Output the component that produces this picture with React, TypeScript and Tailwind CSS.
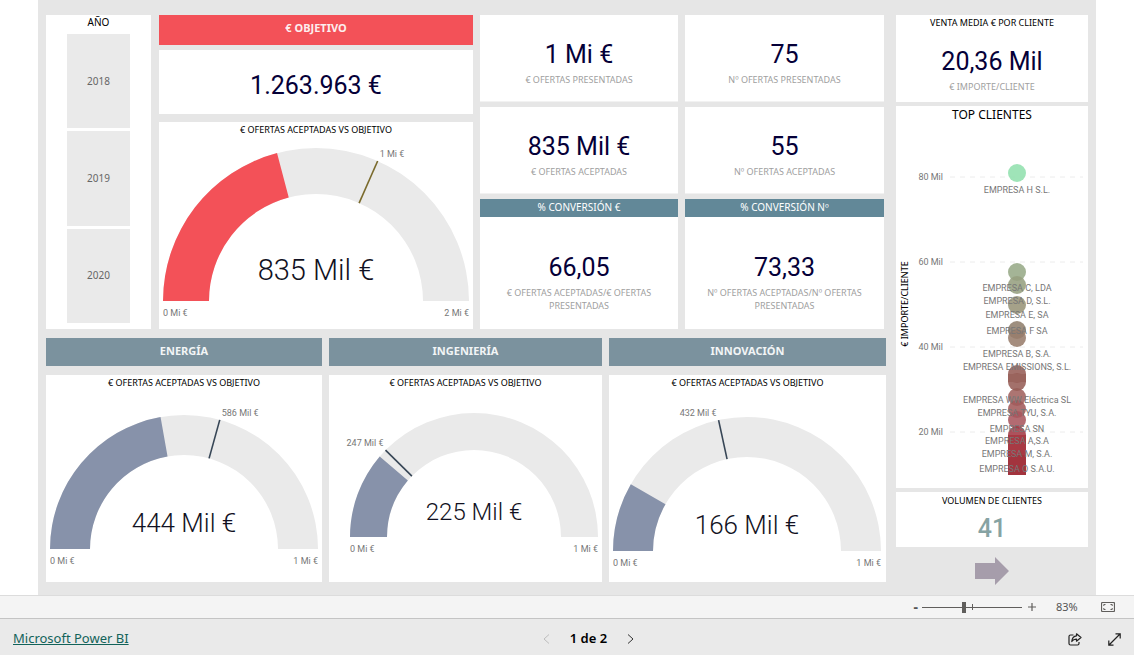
import { useState } from "react";

const DIN = "font-[Roboto,'Liberation_Sans',sans-serif]";
const SEGOE = "font-['Noto_Sans','Open_Sans',sans-serif]";

type GaugeProps = {
  width: number;
  height: number;
  cx: number;
  cy: number;
  r: number;
  inner: number;
  value: number;
  target: number;
  color: string;
  targetColor: string;
  valueLabel: string;
  targetLabel: string;
  maxLabel: string;
  valueClass: string;
  valueRise: number;
};

// t runs from 0 (left end) to 1 (right end) along the half circle
function polar(cx: number, cy: number, r: number, t: number) {
  const a = Math.PI * (1 - t);
  return [cx + r * Math.cos(a), cy - r * Math.sin(a)];
}

function arc(cx: number, cy: number, r: number, inner: number, from: number, to: number) {
  const [x1, y1] = polar(cx, cy, r, from);
  const [x2, y2] = polar(cx, cy, r, to);
  const [x3, y3] = polar(cx, cy, inner, to);
  const [x4, y4] = polar(cx, cy, inner, from);
  return `M${x1} ${y1}A${r} ${r} 0 0 1 ${x2} ${y2}L${x3} ${y3}A${inner} ${inner} 0 0 0 ${x4} ${y4}Z`;
}

function Gauge(p: GaugeProps) {
  const [tx1, ty1] = polar(p.cx, p.cy, p.r, p.target);
  const [tx2, ty2] = polar(p.cx, p.cy, p.inner, p.target);
  const right = p.target > 0.5;
  return (
    <svg viewBox={`0 0 ${p.width} ${p.height}`} className={`block w-full ${DIN}`} role="img" aria-label={p.valueLabel}>
      <path d={arc(p.cx, p.cy, p.r, p.inner, 0, 1)} fill="#eaeaea" />
      <path d={arc(p.cx, p.cy, p.r, p.inner, 0, p.value)} fill={p.color} />
      <line x1={tx1} y1={ty1} x2={tx2} y2={ty2} stroke={p.targetColor} strokeWidth="1.6" />
      <text x={right ? tx1 + 2 : tx1 - 2} y={ty1 - 4} textAnchor={right ? "start" : "end"} className="fill-[#777] text-[9px]">
        {p.targetLabel}
      </text>
      <text x={p.cx} y={p.cy - p.valueRise} textAnchor="middle" className={`fill-[#111122] font-light ${p.valueClass}`}>
        {p.valueLabel}
      </text>
      <text x={p.cx - p.r} y={p.cy + 15} className="fill-[#777] text-[9px]">
        0 Mi €
      </text>
      <text x={p.cx + p.r} y={p.cy + 15} textAnchor="end" className="fill-[#777] text-[9px]">
        {p.maxLabel}
      </text>
    </svg>
  );
}

function PanelTitle({ children }: { children: string }) {
  return <h2 className="text-center text-[9px] leading-[15px] text-black">{children}</h2>;
}

function Metric({ value, label }: { value: string; label: string }) {
  return (
    <>
      <p className={`text-[25px] leading-7 text-[#050038] ${DIN}`}>{value}</p>
      <p className="mt-1 text-[9px] leading-[13px] text-[#a0a0a0]">{label}</p>
    </>
  );
}

function MetricColumn({ items, title, ratio, ratioLabel }: {
  items: { value: string; label: string }[];
  title: string;
  ratio: string;
  ratioLabel: string;
}) {
  return (
    <div className="flex flex-col text-center">
      {items.map((m) => (
        <div key={m.label} className="mb-[5px] h-[87px] border-b border-[#f2f2f2] bg-white pt-[26px]">
          <Metric {...m} />
        </div>
      ))}
      <h2 className="bg-[#628898] pb-0.5 text-[10px] leading-4 text-white">{title}</h2>
      <div className="flex-1 bg-white px-3 pt-[37px]">
        <Metric value={ratio} label={ratioLabel} />
      </div>
    </div>
  );
}

const bubbles = [
  { y: 49, color: "#92e0ae" },
  { y: 148, color: "#97aa88" },
  { y: 161, color: "#969f80" },
  { y: 181, color: "#999479" },
  { y: 206, color: "#917f6d" },
  { y: 214, color: "#987d6c" },
  { y: 273, color: "#a0625e" },
  { y: 285, color: "#a25a5a" },
  { y: 296, color: "#a8565e" },
  { y: 250, color: "#965d56" },
  { y: 258, color: "#965d56" },
  { y: 311, color: "#a23a45" },
  { y: 320, color: "#a0353f" },
  { y: 330, color: "#a02f39" },
  { y: 338, color: "#a02f39" },
];

const clients = [
  { y: 69, name: "EMPRESA H S.L." },
  { y: 167, name: "EMPRESA C, LDA" },
  { y: 180, name: "EMPRESA D, S.L." },
  { y: 194, name: "EMPRESA E, SA" },
  { y: 210, name: "EMPRESA F SA" },
  { y: 233, name: "EMPRESA B, S.A." },
  { y: 246, name: "EMPRESA EMISSIONS, S.L." },
  { y: 279, name: "EMPRESA WW Eléctrica SL" },
  { y: 292, name: "EMPRESA TYU, S.A." },
  { y: 308, name: "EMPRESA SN" },
  { y: 320, name: "EMPRESA A,S.A" },
  { y: 333, name: "EMPRESA M, S.A." },
  { y: 348, name: "EMPRESA O S.A.U." },
];

const ticks = [
  { y: 53, label: "80 Mil" },
  { y: 138, label: "60 Mil" },
  { y: 223, label: "40 Mil" },
  { y: 308, label: "20 Mil" },
];

function ClientChart() {
  return (
    <svg viewBox="0 0 192 364" className={`block w-full ${DIN}`} role="img" aria-label="TOP CLIENTES">
      {ticks.map((t) => (
        <g key={t.label}>
          <line x1="54" x2="187" y1={t.y} y2={t.y} stroke="#ececec" strokeDasharray="5 5" />
          <text x="47" y={t.y + 3} textAnchor="end" className="fill-[#777] text-[9px]">{t.label}</text>
        </g>
      ))}
      <text transform="translate(12 180) rotate(-90)" textAnchor="middle" className={`fill-black text-[9px] ${SEGOE}`}>
        € IMPORTE/CLIENTE
      </text>
      {bubbles.map((b) => (
        <circle key={b.y} cx="121" cy={b.y} r="9" fill={b.color} fillOpacity="0.88" />
      ))}
      <rect x="112" y="250" width="18" height="8" fill="#9a645d" />
      <rect x="112" y="311" width="18" height="20" fill="#a83a44" />
      <rect x="112" y="331" width="18" height="20" fill="#a3343e" />
      {clients.map((c) => (
        <text key={c.name} x="121" y={c.y} textAnchor="middle" className="fill-[#777] text-[9px]">{c.name}</text>
      ))}
    </svg>
  );
}

const areas = [
  { title: "ENERGÍA", cx: 138, cy: 159, r: 134, inner: 94, value: 0.444, target: 0.586, label: "444 Mil €", targetLabel: "586 Mil €", width: 276, valueClass: "text-[26px]" },
  { title: "INGENIERÍA", cx: 145, cy: 147, r: 124, inner: 87, value: 0.225, target: 0.247, label: "225 Mil €", targetLabel: "247 Mil €", width: 273, valueClass: "text-[24px]" },
  { title: "INNOVACIÓN", cx: 138, cy: 161, r: 134, inner: 94, value: 0.166, target: 0.432, label: "166 Mil €", targetLabel: "432 Mil €", width: 277, valueClass: "text-[26px]" },
];

export default function App() {
  const [zoom, setZoom] = useState(83);
  const [year, setYear] = useState<number | null>(null);

  return (
    <div className={`flex min-h-screen flex-col bg-white ${SEGOE}`}>
      <main className="mx-[38px] flex flex-1 gap-2.5 bg-[#e6e6e6] px-2 pt-[15px]">
        <div className="flex min-w-0 flex-1 flex-col">
          <div className="grid grid-cols-[105fr_315fr_198fr_199fr] gap-x-[7px] pr-0.5">
            <section className="flex flex-col bg-white pb-1.5">
              <h2 className="text-center text-[10px] leading-[15px]">AÑO</h2>
              <div className="mx-[21px] mt-1 flex flex-1 flex-col gap-[3px]">
                {[2018, 2019, 2020].map((y) => (
                  <button
                    key={y}
                    onClick={() => setYear(year === y ? null : y)}
                    className={year === y ? "flex-1 bg-[#666] text-[10px] text-white" : "flex-1 bg-[#eaeaea] text-[10px] text-[#666]"}
                  >
                    {y}
                  </button>
                ))}
              </div>
            </section>

            <div className="flex flex-col pl-px">
              <h2 className="bg-[#f35158] pb-1 text-center text-[11px] leading-[26px] font-bold text-[#fdeeee]">€ OBJETIVO</h2>
              <p className={`mt-[5px] bg-white pt-2 text-center text-[25px] leading-[56px] text-[#050038] ${DIN}`}>1.263.963 €</p>
              <section className="mt-2 bg-white">
                <PanelTitle>€ OFERTAS ACEPTADAS VS OBJETIVO</PanelTitle>
                <Gauge
                  width={314}
                  height={192}
                  cx={157}
                  cy={164}
                  r={153}
                  inner={107}
                  value={0.418}
                  target={0.632}
                  color="#f35158"
                  targetColor="#7a6a2c"
                  valueLabel="835 Mil €"
                  targetLabel="1 Mi €"
                  maxLabel="2 Mi €"
                  valueClass="text-[29px]"
                  valueRise={21}
                />
              </section>
            </div>

            <MetricColumn
              items={[
                { value: "1 Mi €", label: "€ OFERTAS PRESENTADAS" },
                { value: "835 Mil €", label: "€ OFERTAS ACEPTADAS" },
              ]}
              title="% CONVERSIÓN €"
              ratio="66,05"
              ratioLabel="€ OFERTAS ACEPTADAS/€ OFERTAS PRESENTADAS"
            />
            <MetricColumn
              items={[
                { value: "75", label: "Nº OFERTAS PRESENTADAS" },
                { value: "55", label: "Nº OFERTAS ACEPTADAS" },
              ]}
              title="% CONVERSIÓN Nº"
              ratio="73,33"
              ratioLabel="Nº OFERTAS ACEPTADAS/Nº OFERTAS PRESENTADAS"
            />
          </div>

          <div className="mt-[9px] grid grid-cols-[276fr_273fr_277fr] gap-x-[7px]">
            {areas.map((a) => (
              <section key={a.title}>
                <h2 className="bg-[#7b929e] pb-0.5 text-center text-[11px] leading-[26px] font-bold text-[#f2f5f6]">{a.title}</h2>
                <div className="mt-[9px] h-[207px] bg-white">
                  <PanelTitle>€ OFERTAS ACEPTADAS VS OBJETIVO</PanelTitle>
                  <Gauge
                    width={a.width}
                    height={192}
                    cx={a.cx}
                    cy={a.cy}
                    r={a.r}
                    inner={a.inner}
                    value={a.value}
                    target={a.target}
                    color="#8792aa"
                    targetColor="#374656"
                    valueLabel={a.label}
                    targetLabel={a.targetLabel}
                    maxLabel="1 Mi €"
                    valueClass={a.valueClass}
                    valueRise={17}
                  />
                </div>
              </section>
            ))}
          </div>
        </div>

        <aside className="flex w-48 flex-col text-center">
          <section className="h-[87px] bg-white">
            <h2 className="mb-[18px] text-[9px] leading-[15px]">VENTA MEDIA € POR CLIENTE</h2>
            <Metric value="20,36 Mil" label="€ IMPORTE/CLIENTE" />
          </section>
          <section className="mt-1 bg-white">
            <h2 className="text-xs leading-[18px]">TOP CLIENTES</h2>
            <ClientChart />
          </section>
          <section className="mt-1 bg-white">
            <h2 className="text-[9px] leading-[17px]">VOLUMEN DE CLIENTES</h2>
            <p className={`pt-1.5 pb-1 text-[25px] leading-7 font-medium text-[#86a3a3] ${DIN}`}>41</p>
          </section>
          <button aria-label="Página siguiente" className="mt-2.5 self-center">
            <svg width="34" height="28" viewBox="0 0 34 28" className="block">
              <path d="M0 6H20V0L34 14L20 28V22H0Z" fill="#a69dab" />
            </svg>
          </button>
        </aside>
      </main>

      <div className="flex h-[23px] items-center justify-end border-t border-[#dcdcdc] bg-[#f4f4f4] pr-[19px] text-[#555]">
        <button aria-label="Alejar" className="mr-1 text-sm leading-none font-bold">-</button>
        <div className="relative flex items-center">
          <span className="absolute left-1/2 h-1.5 w-px bg-[#605e5c]" />
          <input
            type="range"
            aria-label="Zoom"
            min={0}
            max={200}
            value={zoom}
            onChange={(e) => setZoom(Number(e.target.value))}
            className="relative h-3 w-[100px] appearance-none bg-transparent [&::-webkit-slider-runnable-track]:h-px [&::-webkit-slider-runnable-track]:bg-[#605e5c] [&::-webkit-slider-thumb]:-mt-[5px] [&::-webkit-slider-thumb]:h-[11px] [&::-webkit-slider-thumb]:w-1 [&::-webkit-slider-thumb]:appearance-none [&::-webkit-slider-thumb]:bg-[#605e5c]"
          />
        </div>
        <button aria-label="Acercar" className="ml-1.5">
          <svg width="8" height="8" viewBox="0 0 8 8" className="block" stroke="#605e5c" strokeWidth="1.2">
            <path d="M4 0V8M0 4H8" />
          </svg>
        </button>
        <span className="ml-5 w-[23px] text-[11px]">{zoom}%</span>
        <button aria-label="Ajustar a la página" className="ml-[22px]">
          <svg width="14" height="10" viewBox="0 0 14 10" className="block" fill="none" stroke="#605e5c">
            <rect x="0.5" y="0.5" width="13" height="9" rx="1" strokeWidth="1.2" />
            <path d="M4.5 2.5H2.8V4M2.8 6V7.5H4.5M9.5 2.5H11.2V4M11.2 6V7.5H9.5" />
          </svg>
        </button>
      </div>

      <footer className="grid h-[37px] grid-cols-[1fr_auto_1fr] items-center border-t border-[#c4c4c4] bg-[#eaeaea] px-[13px] pt-1">
        <a href="https://powerbi.microsoft.com" className="justify-self-start text-[13px] text-[#12635a] underline">
          Microsoft Power BI
        </a>
        <nav className="ml-[43px] flex items-center gap-5 text-[13px] font-semibold text-black">
          <button aria-label="Página anterior" disabled>
            <svg width="7" height="10" viewBox="0 0 7 10" className="block" fill="none" stroke="#bdbdbd">
              <path d="M6 0.5L1 5L6 9.5" />
            </svg>
          </button>
          <span>1 de 2</span>
          <button aria-label="Página siguiente">
            <svg width="7" height="10" viewBox="0 0 7 10" className="block" fill="none" stroke="#333">
              <path d="M1 0.5L6 5L1 9.5" />
            </svg>
          </button>
        </nav>
        <div className="flex items-center gap-[26px] justify-self-end">
          <button aria-label="Compartir">
            <svg width="14" height="13" viewBox="0 0 14 13" className="block" fill="none" stroke="#222" strokeWidth="1.2" strokeLinejoin="round">
              <path d="M5.5 2H2.5Q1 2 1 3.5V10.5Q1 12 2.5 12H9.5Q11 12 11 10.5V9" />
              <path d="M8.5 0.8L13 4.5L8.5 8.2V6.2Q5.5 6 3.8 8.5Q4.2 3.2 8.5 2.8Z" />
            </svg>
          </button>
          <button aria-label="Pantalla completa">
            <svg width="13" height="13" viewBox="0 0 13 13" className="block" fill="none" stroke="#222" strokeWidth="1.2">
              <path d="M1 12L12 1M7.5 0.8H12.2V5.5M0.8 7.5V12.2H5.5" />
            </svg>
          </button>
        </div>
      </footer>
    </div>
  );
}
